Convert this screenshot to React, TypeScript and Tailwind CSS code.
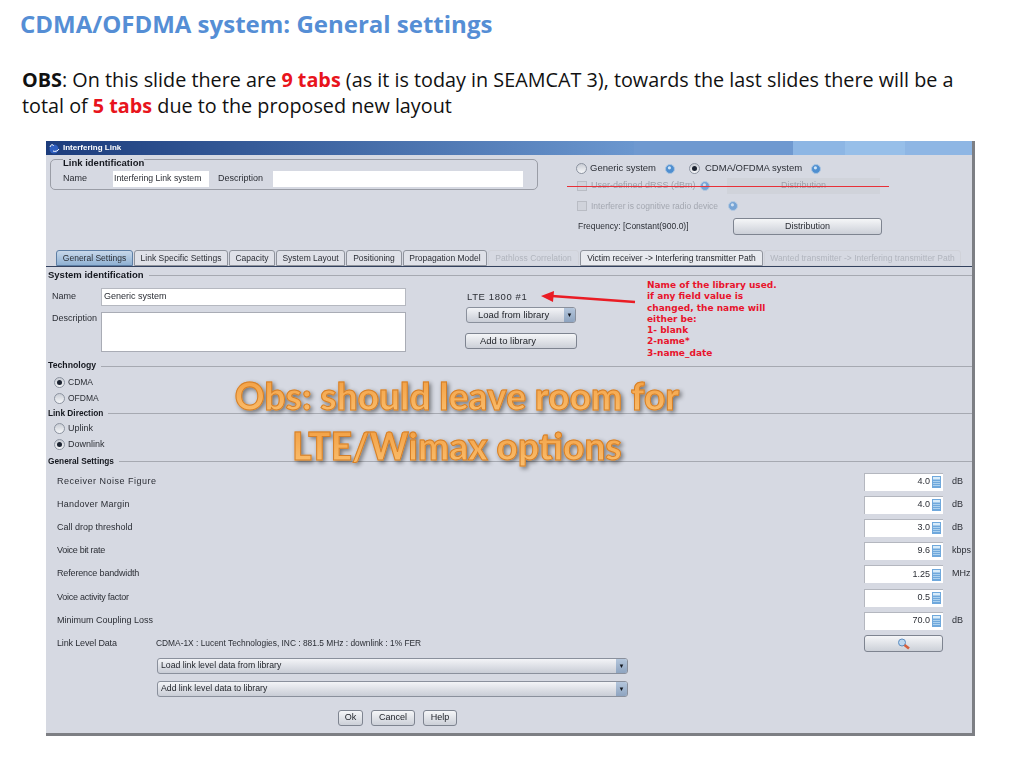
import type { ReactNode } from "react";

const settingRows = [
    { label: "Receiver Noise Figure", value: "4.0", unit: "dB", spacing: "tracking-[0.5px]" },
    { label: "Handover Margin", value: "4.0", unit: "dB", spacing: "tracking-[0.25px]" },
    { label: "Call drop threshold", value: "3.0", unit: "dB", spacing: "" },
    { label: "Voice bit rate", value: "9.6", unit: "kbps", spacing: "tracking-[-0.3px]" },
    { label: "Reference bandwidth", value: "1.25", unit: "MHz", spacing: "tracking-[-0.15px]" },
    { label: "Voice activity factor", value: "0.5", unit: "", spacing: "tracking-[-0.25px]" },
    { label: "Minimum Coupling Loss", value: "70.0", unit: "dB", spacing: "" },
];

const tabs = [
    { label: "General Settings", width: "w-[77px]", kind: "active" },
    { label: "Link Specific Settings", width: "w-[94px]", kind: "normal" },
    { label: "Capacity", width: "w-[46px]", kind: "normal" },
    { label: "System Layout", width: "w-[69px]", kind: "normal" },
    { label: "Positioning", width: "w-[56px]", kind: "normal" },
    { label: "Propagation Model", width: "w-[84px]", kind: "normal" },
    { label: "Pathloss Correlation", width: "w-[91px]", kind: "disabled" },
    { label: "Victim receiver -> Interfering transmitter Path", width: "w-[183px]", kind: "white" },
    { label: "Wanted transmitter -> Interfering transmitter Path", width: "w-[197px]", kind: "disabled" },
];

function HelpIcon({ faded }: { faded?: boolean }) {
    return (
        <svg width="10" height="10" viewBox="0 0 10 10" className={faded ? "shrink-0 opacity-70" : "shrink-0"}>
            <circle cx="5" cy="5" r="4.5" fill="#4f8fd0" stroke="#a9c4e0" />
            <circle cx="4.4" cy="3.8" r="1.6" fill="#cfe4f7" />
        </svg>
    );
}

function Radio({ checked }: { checked?: boolean }) {
    return (
        <span className="flex h-[11px] w-[11px] shrink-0 items-center justify-center rounded-full border border-[#8c93a0] bg-gradient-to-b from-[#c9cdd5] to-[#f6f7f9]">
            {checked && <span className="h-[5px] w-[5px] rounded-full bg-[#1b2230]" />}
        </span>
    );
}

function CalcIcon() {
    return (
        <svg width="9" height="12" viewBox="0 0 9 12" className="shrink-0">
            <rect width="9" height="12" fill="#6fa8dc" />
            <rect x="1" y="1" width="7" height="2.5" fill="#d8ecfa" />
            <path d="M1 5.5h7M1 7.5h7M1 9.5h7" stroke="#bcdcf3" strokeWidth="0.8" />
        </svg>
    );
}

function SectionHeading({ title, className }: { title: string; className: string }) {
    return (
        <div className={`flex items-center pl-[2px] ${className}`}>
            <span className="font-bold text-[#15181f]">{title}</span>
            <span className="ml-[5px] h-px flex-1 bg-[#a6a9b1]" />
        </div>
    );
}

function SelectBar({ label, className }: { label: string; className: string }) {
    return (
        <div className={`flex items-center justify-between rounded-[3px] border border-[#8a909c] bg-gradient-to-b from-[#f3f4f7] to-[#c9cdd6] pl-[3px] text-[#23262c] ${className}`}>
            <span>{label}</span>
            <span className="flex h-full w-[11px] items-center justify-center rounded-r-[2px] bg-gradient-to-b from-[#b4c6dc] to-[#8ea4c0] text-[6px] text-[#10141c]">▼</span>
        </div>
    );
}

function SmallButton({ children, width }: { children: ReactNode; width: string }) {
    return (
        <div className={`flex h-[16px] items-center justify-center rounded-[3px] border border-[#7e8490] bg-gradient-to-b from-[#f5f6f8] to-[#ccd0d8] text-[9px] text-[#23262c] ${width}`}>
            {children}
        </div>
    );
}

export default function App() {
    return (
        <div className="relative h-[768px] w-[1024px] overflow-hidden bg-white font-['Open_Sans',sans-serif]">
            <h1 className="pl-5 pt-[7px] text-[24px] font-bold leading-[33px] text-[#558ed5]">
                CDMA/OFDMA system: General settings
            </h1>
            <p className="mt-[27px] w-[1000px] pl-[22px] text-[19.8px] leading-[26px] text-[#111]">
                <b>OBS</b>: On this slide there are <b className="text-[#e8141c]">9 tabs</b> (as it is today in SEAMCAT 3), towards the last slides there will be a
                <br />
                total of <b className="text-[#e8141c]">5 tabs</b> due to the proposed new layout
            </p>

            <div className="ml-[46px] mt-[22px] flex h-[595px] w-[929px] flex-col border-b-[3px] border-r-[3px] border-[#7d7f84] bg-[#d6d9e2] font-['Liberation_Sans',sans-serif] text-[9px] text-[#2b2e35] blur-[0.3px]">
                {/* title bar */}
                <div className="flex h-[14px] shrink-0 text-[#fff]">
                    <div className="flex w-[588px] items-center gap-[3px] bg-gradient-to-r from-[#1c3c7c] to-[#6b97cf] pl-[2px] text-[8px] font-bold">
                        <svg width="12" height="11" viewBox="0 0 12 11">
                            <circle cx="6" cy="6" r="4.5" fill="#2f5fc0" />
                            <path d="M2 4c1-3 3-3 3.5-1M5 8c2 1 5 0 6-2" stroke="#fff" fill="none" />
                        </svg>
                        Interfering Link
                    </div>
                    <div className="w-[159px] bg-[#6f99d0]" />
                    <div className="w-[52px] bg-[#8db6e4]" />
                    <div className="w-[60px] bg-[#97bfe9]" />
                    <div className="flex-1 bg-[#8eb6e4]" />
                </div>

                {/* top area */}
                <div className="flex h-[95px] shrink-0">
                    <fieldset className="ml-[4px] mt-[-1px] h-[36px] w-[488px] rounded-[5px] border border-[#9a9da6] pl-[12px] pt-[6px]">
                        <legend className="px-0 text-[9.5px] font-bold leading-[11px] text-[#15181f]">
                            <span className="relative top-[3px]">Link identification</span>
                        </legend>
                        <div className="flex items-center">
                            <span className="w-[50px]">Name</span>
                            <span className="flex h-[16px] w-[96px] items-center bg-white pl-px text-[8.7px]">Interfering Link system</span>
                            <span className="ml-[9px] w-[55px]">Description</span>
                            <span className="h-[16px] w-[250px] bg-white" />
                        </div>
                    </fieldset>
                    <div className="ml-[38px] flex flex-col pt-[7px] text-[9.5px]">
                        <div className="flex h-[13px] items-center">
                            <Radio />
                            <span className="ml-[3px] w-[75px]">Generic system</span>
                            <HelpIcon />
                            <span className="ml-[14px]"><Radio checked /></span>
                            <span className="ml-[5px] w-[106px]">CDMA/OFDMA system</span>
                            <HelpIcon />
                        </div>
                        <div className="ml-px mt-[3px] flex h-[16px] items-center text-[#9da1aa]">
                            <span className="h-[10px] w-[10px] border border-[#b9bcc4] bg-[#d0d3db]" />
                            <span className="ml-[4px] w-[109px] whitespace-nowrap text-[9px]">User-defined dRSS (dBm)</span>
                            <HelpIcon faded />
                            <span className="ml-[17px] flex h-[16px] w-[153px] items-center justify-center bg-[#d0d3da] text-[9px]">Distribution</span>
                        </div>
                        <div className="ml-px mt-[4px] flex h-[16px] items-center text-[#a3a7b0]">
                            <span className="h-[10px] w-[10px] border border-[#b9bcc4] bg-[#d0d3db]" />
                            <span className="ml-[4px] w-[137px] text-[8.5px]">Interferer is cognitive radio device</span>
                            <HelpIcon faded />
                        </div>
                        <div className="ml-[2px] mt-[4px] flex h-[17px] items-center text-[8.5px]">
                            <span className="w-[155px]">Frequency: [Constant(900.0)]</span>
                            <span className="flex h-[17px] w-[149px] items-center justify-center rounded-[3px] border border-[#7e8490] bg-gradient-to-b from-[#f5f6f8] to-[#ccd0d8] text-[9px]">Distribution</span>
                        </div>
                    </div>
                </div>

                {/* tabs */}
                <div className="flex h-[17px] shrink-0 border-b border-[#33425f] pl-[10px]">
                    {tabs.map((tab) => (
                        <div
                            key={tab.label}
                            className={`mr-px flex items-center justify-center whitespace-nowrap rounded-t-[3px] text-[8.5px] ${tab.width} ${
                                tab.kind === "active"
                                    ? "border border-[#5e7fa5] bg-gradient-to-b from-[#c8d8ea] to-[#8fb1d3]"
                                    : tab.kind === "normal"
                                      ? "border border-[#8f939c] bg-[#dfe1e8]"
                                      : tab.kind === "white"
                                        ? "border border-[#8f939c] bg-[#e8eaef] text-[#1f2228]"
                                        : "border border-[#d0d2d9] text-[#b1b5be]"
                            }`}
                        >
                            {tab.label}
                        </div>
                    ))}
                </div>

                <SectionHeading title="System identification" className="h-[17px] shrink-0 text-[9.5px]" />

                <div className="flex h-[74px] shrink-0">
                    <div className="flex w-[361px] flex-col pl-[6px]">
                        <div className="mt-[4px] flex items-center">
                            <span className="w-[49px]">Name</span>
                            <span className="flex h-[18px] w-[305px] items-center border border-[#b5b8c0] bg-white pl-[2px]">Generic system</span>
                        </div>
                        <div className="mt-[6px] flex">
                            <span className="w-[49px]">Description</span>
                            <span className="h-[40px] w-[305px] border border-[#a9acb5] bg-white" />
                        </div>
                    </div>
                    <div className="ml-[58px] flex w-[113px] flex-col">
                        <span className="ml-[2px] mt-[6px] h-[17px] text-[9.5px] tracking-[0.6px]">LTE 1800 #1</span>
                        <SelectBar label="Load from library" className="ml-px h-[16px] w-[110px] text-[9.5px] [&>span:first-child]:ml-[8px]" />
                        <div className="mt-[10px]">
                            <SmallButton width="w-[112px]"><span className="mr-[26px] text-[9.5px]">Add to library</span></SmallButton>
                        </div>
                    </div>
                </div>

                <SectionHeading title="Technology" className="h-[16px] shrink-0 text-[8.7px]" />
                <div className="flex h-[16px] shrink-0 items-center gap-[3px] pl-[8px]"><Radio checked /><span className="text-[8.5px]">CDMA</span></div>
                <div className="flex h-[16px] shrink-0 items-center gap-[3px] pl-[8px]"><Radio /><span className="text-[8.5px]">OFDMA</span></div>
                <SectionHeading title="Link Direction" className="h-[15px] shrink-0 text-[8.3px]" />
                <div className="flex h-[15px] shrink-0 items-center gap-[3px] pl-[8px]"><Radio />Uplink</div>
                <div className="flex h-[17px] shrink-0 items-center gap-[3px] pl-[8px]"><Radio checked />Downlink</div>
                <SectionHeading title="General Settings" className="h-[17px] shrink-0 text-[8.3px]" />

                {/* setting rows */}
                {settingRows.map((row) => (
                    <div key={row.label} className={`flex shrink-0 items-center pl-[11px] ${row.unit === "MHz" ? "h-[24px]" : "h-[23px]"}`}>
                        <span className={`w-[807px] ${row.spacing}`}>{row.label}</span>
                        <span className="flex h-[18px] w-[79px] items-center justify-end gap-[2px] border-l border-t border-[#b4b7bf] bg-white pr-[2px]">
                            {row.value}
                            <CalcIcon />
                        </span>
                        <span className="ml-[9px]">{row.unit}</span>
                    </div>
                ))}
                <div className="flex h-[23px] shrink-0 items-center pl-[11px]">
                    <span className="w-[99px] tracking-[-0.15px]">Link Level Data</span>
                    <span className="w-[708px] text-[8.4px]">CDMA-1X : Lucent Technologies, INC : 881.5 MHz : downlink : 1% FER</span>
                    <span className="flex h-[17px] w-[79px] items-center justify-center rounded-[3px] border border-[#7e8490] bg-gradient-to-b from-[#f5f6f8] to-[#ccd0d8]">
                        <svg width="14" height="12" viewBox="0 0 14 12">
                            <circle cx="5" cy="4.5" r="3.5" fill="#bcd8f0" stroke="#5b8cc0" />
                            <path d="M7.5 7l4.5 3.5" stroke="#d4603e" strokeWidth="2.6" />
                        </svg>
                    </span>
                </div>

                <div className="ml-[111px] mt-[3px] flex w-[471px] shrink-0 flex-col gap-[7px] text-[8.7px]">
                    <SelectBar label="Load link level data from library" className="h-[16px]" />
                    <SelectBar label="Add  link level data to library" className="h-[16px]" />
                </div>
                <div className="ml-[292px] mt-[13px] flex shrink-0 gap-[8px]">
                    <SmallButton width="w-[25px]">Ok</SmallButton>
                    <SmallButton width="w-[44px]">Cancel</SmallButton>
                    <SmallButton width="w-[34px]">Help</SmallButton>
                </div>
            </div>

            {/* annotations drawn over the dialog */}
            <div className="absolute left-[567px] top-[186px] h-px w-[322px] bg-[#e83038]" />
            <svg className="absolute left-[540px] top-[288px]" width="100" height="18" viewBox="0 0 100 18">
                <path d="M12 8L95 14" stroke="#ea1c24" strokeWidth="2.5" />
                <path d="M1 8L14 3L13 14Z" fill="#ea1c24" />
            </svg>
            <div className="absolute left-[647px] top-[280px] font-['DejaVu_Sans',sans-serif] text-[9px] font-bold leading-[11.3px] text-[#e8142c]">
                Name of the library used.
                <br />
                if any field value is
                <br />
                changed, the name will
                <br />
                either be:
                <br />
                1- blank
                <br />
                2-name*
                <br />
                3-name_date
            </div>
            <div className="absolute left-[204px] top-[371px] flex w-[506px] flex-col items-center font-['Lato',sans-serif] text-[37px] font-black leading-[50px] [-webkit-text-stroke:1px_#d57f28] drop-shadow-[2px_2px_2px_rgba(0,0,0,0.45)]">
                <span className="bg-gradient-to-b from-[#f19a38] to-[#fbc374] bg-clip-text text-transparent">Obs: should leave room for</span>
                <span className="bg-gradient-to-b from-[#f19a38] to-[#fbc374] bg-clip-text text-transparent">LTE/Wimax options</span>
            </div>
        </div>
    );
}
